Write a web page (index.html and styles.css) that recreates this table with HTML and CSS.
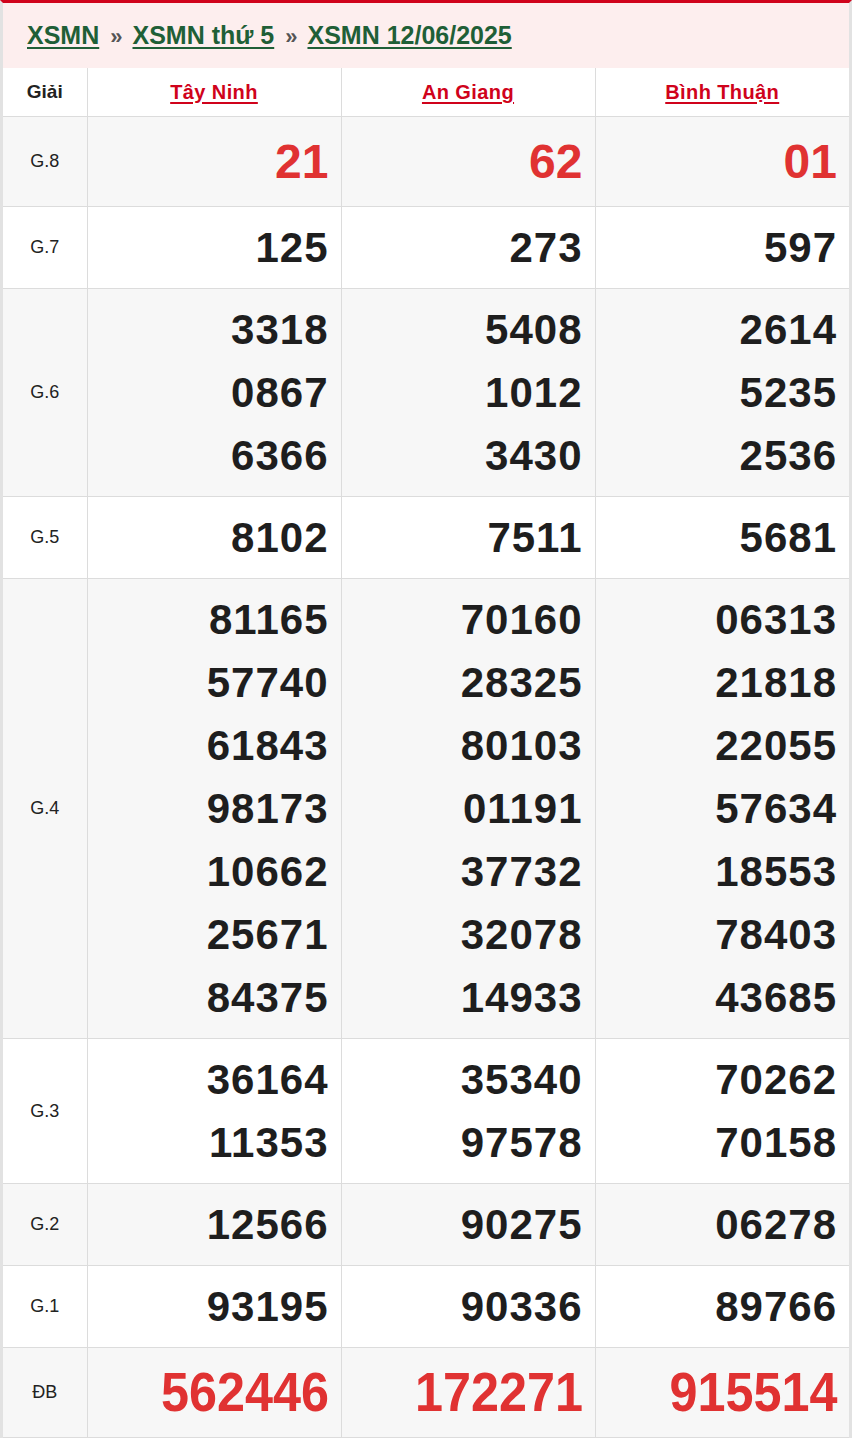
FILE: index.html
```html
<!DOCTYPE html>
<html lang="vi">
<head>
<meta charset="utf-8">
<title>XSMN 12/06/2025</title>
<link rel="stylesheet" href="styles.css">
</head>
<body>
<div class="box">
  <div class="crumbs">
    <a href="#">XSMN</a><span class="sep">»</span><a href="#">XSMN thứ 5</a><span class="sep">»</span><a href="#">XSMN 12/06/2025</a>
  </div>
  <table class="kq">
    <colgroup><col class="c-label"><col class="c-prov"><col class="c-prov"><col class="c-prov"></colgroup>
    <thead>
      <tr class="head">
        <th class="label">Giải</th>
        <th><a href="#">Tây Ninh</a></th>
        <th><a href="#">An Giang</a></th>
        <th><a href="#">Bình Thuận</a></th>
      </tr>
    </thead>
    <tbody>
      <tr class="alt g8">
        <td class="label">G.8</td>
        <td class="num red big"><div>21</div></td>
        <td class="num red big"><div>62</div></td>
        <td class="num red big"><div>01</div></td>
      </tr>
      <tr>
        <td class="label">G.7</td>
        <td class="num"><div>125</div></td>
        <td class="num"><div>273</div></td>
        <td class="num"><div>597</div></td>
      </tr>
      <tr class="alt">
        <td class="label">G.6</td>
        <td class="num"><div>3318</div><div>0867</div><div>6366</div></td>
        <td class="num"><div>5408</div><div>1012</div><div>3430</div></td>
        <td class="num"><div>2614</div><div>5235</div><div>2536</div></td>
      </tr>
      <tr>
        <td class="label">G.5</td>
        <td class="num"><div>8102</div></td>
        <td class="num"><div>7511</div></td>
        <td class="num"><div>5681</div></td>
      </tr>
      <tr class="alt">
        <td class="label">G.4</td>
        <td class="num"><div>81165</div><div>57740</div><div>61843</div><div>98173</div><div>10662</div><div>25671</div><div>84375</div></td>
        <td class="num"><div>70160</div><div>28325</div><div>80103</div><div>01191</div><div>37732</div><div>32078</div><div>14933</div></td>
        <td class="num"><div>06313</div><div>21818</div><div>22055</div><div>57634</div><div>18553</div><div>78403</div><div>43685</div></td>
      </tr>
      <tr>
        <td class="label">G.3</td>
        <td class="num"><div>36164</div><div>11353</div></td>
        <td class="num"><div>35340</div><div>97578</div></td>
        <td class="num"><div>70262</div><div>70158</div></td>
      </tr>
      <tr class="alt">
        <td class="label">G.2</td>
        <td class="num"><div>12566</div></td>
        <td class="num"><div>90275</div></td>
        <td class="num"><div>06278</div></td>
      </tr>
      <tr>
        <td class="label">G.1</td>
        <td class="num"><div>93195</div></td>
        <td class="num"><div>90336</div></td>
        <td class="num"><div>89766</div></td>
      </tr>
      <tr class="alt db">
        <td class="label">ĐB</td>
        <td class="num red special"><div>562446</div></td>
        <td class="num red special"><div>172271</div></td>
        <td class="num red special"><div>915514</div></td>
      </tr>
    </tbody>
  </table>
</div>
</body>
</html>
```

FILE: styles.css
```css
html, body {
  margin: 0;
  padding: 0;
  background: #fff;
}
body {
  font-family: "Liberation Sans", Arial, sans-serif;
  color: #222;
}
.box {
  width: 852px;
  box-sizing: border-box;
  border-top: 3px solid #d0021b;
  border-left: 3px solid #e2e2e2;
  border-right: 3px solid #e2e2e2;
}
.crumbs {
  background: #fdeeee;
  height: 65px;
  box-sizing: border-box;
  padding: 17px 0 0 24px;
  font-size: 25px;
  font-weight: bold;
  line-height: 30px;
  letter-spacing: 0;
  white-space: nowrap;
}
.crumbs a {
  color: #1f5f37;
  text-decoration: underline;
  text-decoration-thickness: 2px;
  text-underline-offset: 3px;
}
.crumbs .sep {
  color: #555;
  margin: 0 10px 0 11px;
  font-size: 22px;
}
.kq {
  width: 846px;
  border-collapse: collapse;
  table-layout: fixed;
}
.c-label { width: 84px; }
.kq th, .kq td {
  border: 1px solid #dcdcdc;
  padding: 0;
}
.kq tr > :first-child { border-left: 0; }
.kq tr > :last-child { border-right: 0; }
.kq thead th { border-top: 0; }
.head th {
  height: 48px;
  background: #fff;
  font-size: 20px;
  font-weight: bold;
  letter-spacing: 0.4px;
  text-align: center;
}
.head th a {
  color: #d0021b;
  text-decoration: underline;
  text-underline-offset: 3px;
}
.head th.label {
  color: #222;
  font-size: 19px;
  letter-spacing: 0;
}
.kq tbody tr { background: #fff; }
.kq tbody tr.alt { background: #f7f7f7; }
.kq td.label {
  text-align: center;
  font-size: 18px;
  color: #222;
  font-weight: normal;
}
.kq td.num {
  text-align: right;
  padding: 9px 12px 9px 0;
  font-size: 42px;
  font-weight: bold;
  line-height: 63px;
  letter-spacing: 1px;
  color: #1e1e1e;
}
.kq td.num.red { color: #e03232; }
.kq td.big {
  font-size: 48px;
  line-height: 71px;
  letter-spacing: 0;
}
.kq td.special {
  font-size: 55px;
  line-height: 71px;
  letter-spacing: 0;
}
.kq td.special div {
  transform: scaleX(0.915);
  transform-origin: right center;
}
```
